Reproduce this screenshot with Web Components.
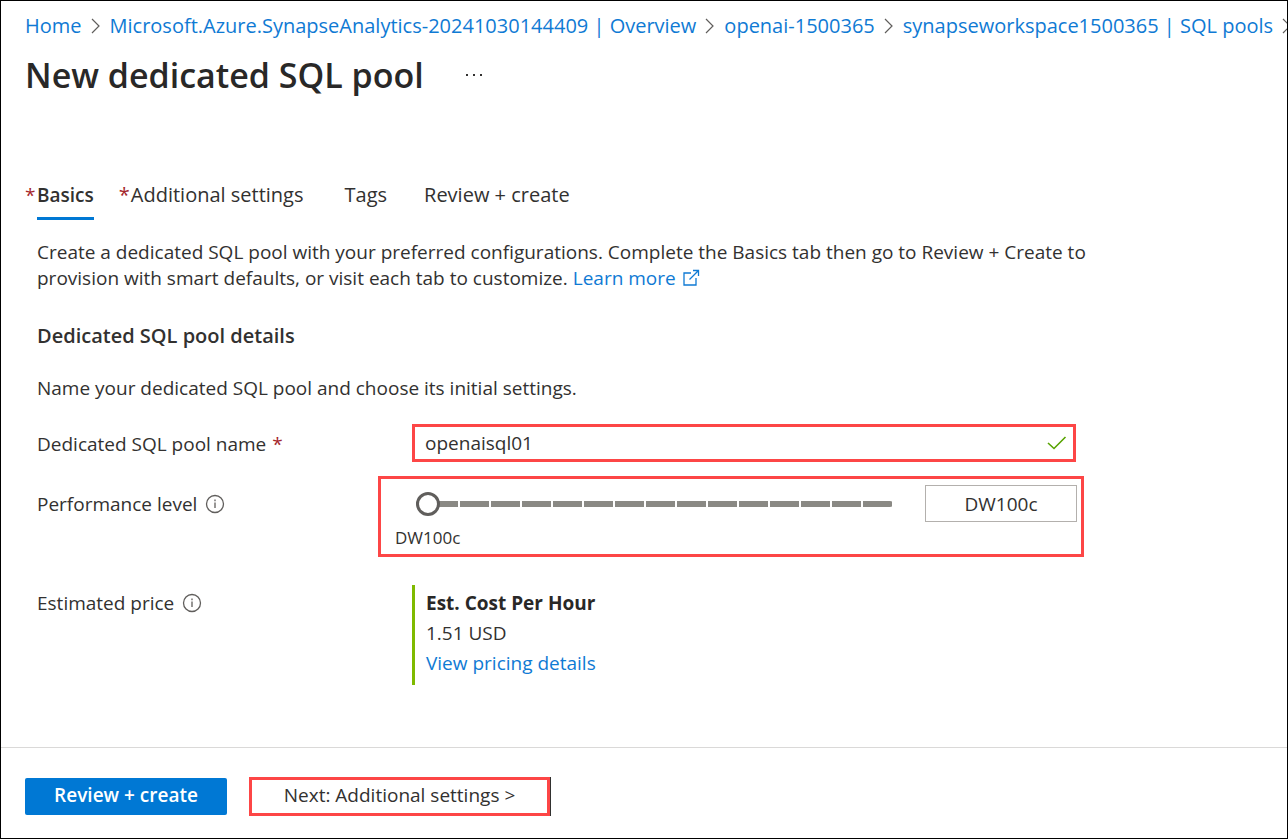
<!DOCTYPE html>
<html lang="en">
<head>
<meta charset="utf-8">
<title>New dedicated SQL pool</title>
<style>
  html, body { margin: 0; }
  body {
    font: 19px/26px "Open Sans", "Noto Sans", sans-serif;
    color: #323130; background: #fff;
    --link: #0f7ad4; --brand: #0078d4; --highlight: #fd4646; --required: #a4262c;
  }
</style>
</head>
<body>
<pool-page></pool-page>
<script>
const define = (name, html, setup) => {
  const template = document.createElement('template');
  template.innerHTML = html;
  customElements.define(name, class extends HTMLElement {
    constructor() {
      super();
      this.attachShadow({ mode: 'open' }).append(template.content.cloneNode(true));
      if (setup) setup(this.shadowRoot);
    }
  });
};

const fieldGrid = `
  :host { display: grid; grid-template-columns: 375px minmax(0, 664px); }
  .label { display: flex; align-items: center; gap: 8px; }`;

define('info-icon', `
<style>:host { display: block; width: 20px; height: 20px; } svg { display: block; }</style>
<svg width="20" height="20" viewBox="0 0 20 20" fill="none" stroke="#605e5c" stroke-width="1.3" aria-hidden="true">
  <circle cx="10" cy="10" r="8.5"/><path d="M10 8.4v5.600M10 5.600v1.700"/>
</svg>`);

define('crumb-trail', `
<style>
  :host { display: block; overflow: hidden; }
  nav { display: flex; align-items: center; gap: 9px; white-space: nowrap; }
  ::slotted(a) { color: var(--link); text-decoration: none; }
  svg { flex: none; display: block; }
</style>
<nav aria-label="Breadcrumb"></nav>`, root => {
  const nav = root.querySelector('nav');
  for (let i = 1; i <= 4; i++) {
    nav.insertAdjacentHTML('beforeend', `<slot name="c${i}"></slot>
      <svg width="10" height="18" viewBox="0 0 10 18" fill="none" stroke="#605e5c" stroke-width="1.2" aria-hidden="true"><path d="M1 2l7 7-7 7"/></svg>`);
  }
});

define('page-heading', `
<style>
  :host { display: flex; align-items: center; gap: 42px; }
  h1 { margin: 0; font-size: 34px; line-height: 48px; font-weight: 600; color: #292827; }
  button { border: 0; padding: 0; background: none; display: block; }
  svg { display: block; }
</style>
<h1><slot></slot></h1>
<button aria-label="More actions"><svg width="16" height="4" viewBox="0 0 16 4" fill="#323130"><path d="M0 1h2v2H0zM7 1h2v2H7zM14 1h2v2h-2z"/></svg></button>`);

define('tab-link', `
<style>
  :host { display: flex; font-size: 20px; }
  :host([selected]) { font-size: 19px; }
  :host([required]:not([selected])) { padding-right: 4px; }
  .mark { width: 12px; color: var(--required); }
  a { color: inherit; text-decoration: none; padding-bottom: 9px; border-bottom: 3px solid transparent; }
  :host([selected]) a { font-weight: 600; border-color: var(--brand); }
  .mark { visibility: hidden; }
  :host([required]) .mark { visibility: visible; }
</style>
<span class="mark">*</span><a href="#"><slot></slot></a>`);

define('tab-strip', `
<style>:host { display: block; } nav { display: flex; gap: 25px; }</style>
<nav aria-label="Steps"><slot></slot></nav>`);

define('intro-text', `
<style>
  :host { display: block; max-width: 1080px; }
  p { margin: 0; }
  a { color: var(--link); text-decoration: none; }
  svg { margin-left: 6px; vertical-align: -2px; }
</style>
<p>Create a dedicated SQL pool with your preferred configurations. Complete the Basics tab then go to Review + Create to<br>
provision with smart defaults, or visit each tab to customize. <a href="#">Learn more<svg width="18" height="18" viewBox="0 0 18 18" fill="none" stroke="currentColor" stroke-width="1.3" aria-hidden="true"><path d="M9 4H2v12h12V9M11 1.500h5.500V7M16.500 1.500L7.500 10.500"/></svg></a></p>`);

define('name-field', `
<style>
  ${fieldGrid}
  .star { color: var(--required); }
  .label { gap: 6px; padding-top: 2px; }
  .box { display: flex; align-items: center; box-sizing: border-box; height: 38px; border: 3px solid var(--highlight); padding: 0 6px 0 10px; }
  input { flex: 1; min-width: 0; border: 0; padding: 0; outline: 0; background: none; font: inherit; color: inherit; }
</style>
<label class="label" for="name">Dedicated SQL pool name <span class="star">*</span></label>
<div class="box">
  <input id="name" type="text" value="openaisql01">
  <svg width="20" height="14" viewBox="0 0 20 14" fill="none" stroke="#57a300" stroke-width="1.6" aria-hidden="true"><path d="M1 7l6 5.500L18.500 1"/></svg>
</div>`);

define('level-field', `
<style>
  ${fieldGrid}
  .label { align-self: start; padding-top: 15px; }
  .box { border: 3px solid var(--highlight); margin: 0 -8px 0 -34px; padding: 6px 4px 4px 14px; }
  .row { display: flex; align-items: center; gap: 32px; padding-left: 21px; }
  input[type=range] { flex: 1; min-width: 0; height: 24px; margin: 0; appearance: none; background: none; }
  input[type=range]::-webkit-slider-runnable-track {
    height: 6px; border-radius: 3px;
    background: linear-gradient(to right, #8a8984 29px, #fff 29px) 13px 0 / 31px 6px;
  }
  input[type=range]::-webkit-slider-thumb {
    appearance: none; box-sizing: border-box; width: 24px; height: 24px; margin-top: -9px;
    border: 3px solid #605e5c; border-radius: 50%; background: #fff;
  }
  .value { box-sizing: border-box; width: 152px; height: 37px; border: 1px solid #b3b0ad; padding: 0; text-align: center; font: inherit; color: inherit; }
  output { display: block; font-size: 17px; line-height: 24px; margin-top: 4px; }
</style>
<label class="label" for="level">Performance level <info-icon></info-icon></label>
<div class="box">
  <div class="row">
    <input id="level" type="range" min="0" max="15" value="0">
    <input class="value" type="text" aria-label="Selected performance level" value="DW100c">
  </div>
  <output for="level">DW100c</output>
</div>`);

define('price-field', `
<style>
  ${fieldGrid}
  .label { align-self: start; padding-top: 5px; }
  .cost { justify-self: start; border-left: 3px solid #7fba00; padding: 3px 0 7px 11px; line-height: 30px; }
  .cost > * { display: block; }
  strong { font-weight: 700; color: #292827; }
  a { color: var(--link); text-decoration: none; }
</style>
<div class="label">Estimated price <info-icon></info-icon></div>
<div class="cost"><strong>Est. Cost Per Hour</strong><span>1.51 USD</span><a href="#">View pricing details</a></div>`);

define('action-bar', `
<style>
  :host { display: flex; align-items: center; gap: 22px; border-top: 1px solid #dad9d8; padding: 29px 24px 22px; }
  button { box-sizing: border-box; font: inherit; font-weight: 600; white-space: nowrap; padding: 0 0 3px; }
  .primary { width: 202px; height: 37px; border: 0; border-radius: 2px; background: var(--brand); color: #fff; }
  .next { width: 301px; height: 39px; border: 3px solid var(--highlight); background: #fff; color: #323130; box-shadow: 1px 0 #323130; font-weight: 500; }
</style>
<button class="primary">Review + create</button>
<button class="next">Next: Additional settings &gt;</button>`);

define('pool-page', `
<style>
  :host { display: flex; flex-direction: column; box-sizing: border-box; min-height: 100vh; border: 1px solid #000; }
  header { padding: 11px 0 0 24px; }
  crumb-trail { font-size: 20px; line-height: 28px; }
  page-heading { margin-top: 11px; }
  main { flex: 1; padding: 83px 24px 24px 36px; }
  tab-strip { margin-left: -12px; }
  intro-text { margin-top: 19px; }
  h2 { margin: 32px 0 26px; font-size: 20px; line-height: 26px; font-weight: 600; }
  p { margin: 0 0 23px; }
  level-field { margin-top: 14px; }
  price-field { margin-top: 28px; }
</style>
<header>
  <crumb-trail>
    <a slot="c1" href="#">Home</a>
    <a slot="c2" href="#">Microsoft.Azure.SynapseAnalytics-20241030144409 | Overview</a>
    <a slot="c3" href="#">openai-1500365</a>
    <a slot="c4" href="#">synapseworkspace1500365 | SQL pools</a>
  </crumb-trail>
  <page-heading>New dedicated SQL pool</page-heading>
</header>
<main>
  <tab-strip>
    <tab-link selected required>Basics</tab-link>
    <tab-link required>Additional settings</tab-link>
    <tab-link>Tags</tab-link>
    <tab-link>Review + create</tab-link>
  </tab-strip>
  <intro-text></intro-text>
  <h2>Dedicated SQL pool details</h2>
  <p>Name your dedicated SQL pool and choose its initial settings.</p>
  <name-field></name-field>
  <level-field></level-field>
  <price-field></price-field>
</main>
<action-bar></action-bar>`);
</script>
</body>
</html>
